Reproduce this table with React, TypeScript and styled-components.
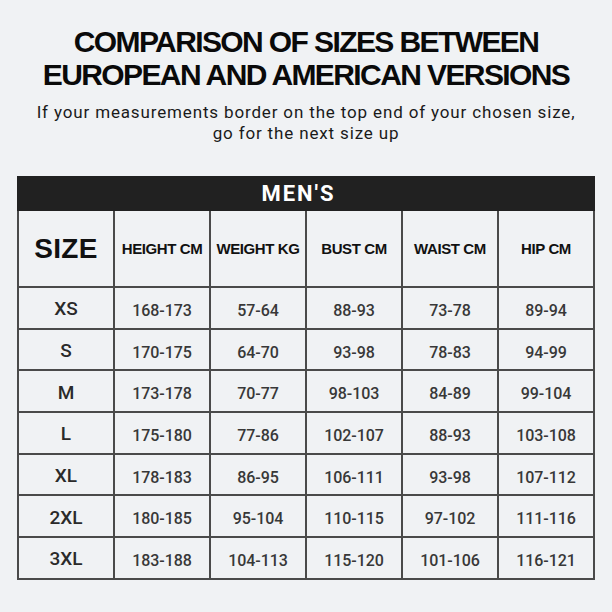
import React from "react";
import styled, { createGlobalStyle } from "styled-components";

const GlobalStyle = createGlobalStyle`
  html, body {
    margin: 0;
    padding: 0;
    background: #f0f2f4;
  }
  * { box-sizing: border-box; }
`;

const Page = styled.div`
  width: 612px;
  height: 612px;
  padding-top: 25px;
  background: #f0f2f4;
  display: flex;
  flex-direction: column;
  align-items: center;
  overflow: hidden;
`;

const Title = styled.h1`
  margin: 0;
  font-family: "Liberation Sans", Arial, sans-serif;
  font-weight: 700;
  font-size: 30px;
  line-height: 33px;
  letter-spacing: -1.6px;
  color: #0a0a0a;
  text-align: center;
`;

const Subtitle = styled.p`
  margin: 11px 0 0;
  font-family: Roboto, "Noto Sans", sans-serif;
  font-weight: 400;
  font-size: 17px;
  line-height: 21px;
  letter-spacing: 0.85px;
  color: #1a1a1a;
  text-align: center;
`;

const Chart = styled.div`
  margin-top: 32px;
  width: 578px;
  display: flex;
  flex-direction: column;
`;

const Banner = styled.div`
  height: 35px;
  background: #212121;
  color: #ffffff;
  font-family: Roboto, "Noto Sans", sans-serif;
  font-weight: 700;
  font-size: 22px;
  letter-spacing: 2px;
  display: flex;
  align-items: center;
  justify-content: center;
  padding-right: 15px;
`;

const Grid = styled.div`
  display: grid;
  grid-template-columns: repeat(6, 1fr);
  grid-template-rows: 77px repeat(7, 41.7px);
  border-left: 2px solid #4a4a4a;
`;

const Cell = styled.div<{ $offset?: number }>`
  display: flex;
  align-items: center;
  justify-content: center;
  border-right: 2px solid #4a4a4a;
  border-bottom: 2px solid #4a4a4a;
  padding-top: ${(p) => p.$offset ?? 0}px;
`;

const SizeHead = styled.span`
  font-family: "Liberation Sans", Arial, sans-serif;
  font-weight: 700;
  font-size: 28px;
  letter-spacing: 0.3px;
  color: #111;
`;

const ColHead = styled.span`
  font-family: "Liberation Sans", Arial, sans-serif;
  font-weight: 700;
  font-size: 15px;
  letter-spacing: -0.4px;
  color: #111;
  white-space: nowrap;
`;

const SizeLabel = styled.span`
  font-family: Roboto, "Noto Sans", sans-serif;
  font-weight: 500;
  font-size: 19px;
  color: #2a2a2a;
`;

const Value = styled.span`
  font-family: Roboto, "Noto Sans", sans-serif;
  font-weight: 500;
  font-size: 16px;
  letter-spacing: -0.1px;
  color: #383838;
`;

const heads = ["HEIGHT CM", "WEIGHT KG", "BUST CM", "WAIST CM", "HIP CM"];

const rows: [string, string, string, string, string, string][] = [
  ["XS", "168-173", "57-64", "88-93", "73-78", "89-94"],
  ["S", "170-175", "64-70", "93-98", "78-83", "94-99"],
  ["M", "173-178", "70-77", "98-103", "84-89", "99-104"],
  ["L", "175-180", "77-86", "102-107", "88-93", "103-108"],
  ["XL", "178-183", "86-95", "106-111", "93-98", "107-112"],
  ["2XL", "180-185", "95-104", "110-115", "97-102", "111-116"],
  ["3XL", "183-188", "104-113", "115-120", "101-106", "116-121"],
];

export default function App() {
  return (
    <>
      <GlobalStyle />
      <Page>
        <Title>
          COMPARISON OF SIZES BETWEEN
          <br />
          EUROPEAN AND AMERICAN VERSIONS
        </Title>
        <Subtitle>
          If your measurements border on the top end of your chosen size,
          <br />
          go for the next size up
        </Subtitle>
        <Chart>
          <Banner>MEN'S</Banner>
          <Grid>
            <Cell>
              <SizeHead>SIZE</SizeHead>
            </Cell>
            {heads.map((h) => (
              <Cell key={h}>
                <ColHead>{h}</ColHead>
              </Cell>
            ))}
            {rows.map((r) =>
              r.map((v, i) => (
                <Cell key={r[0] + i} $offset={i === 0 ? 2 : 5}>
                  {i === 0 ? <SizeLabel>{v}</SizeLabel> : <Value>{v}</Value>}
                </Cell>
              ))
            )}
          </Grid>
        </Chart>
      </Page>
    </>
  );
}
